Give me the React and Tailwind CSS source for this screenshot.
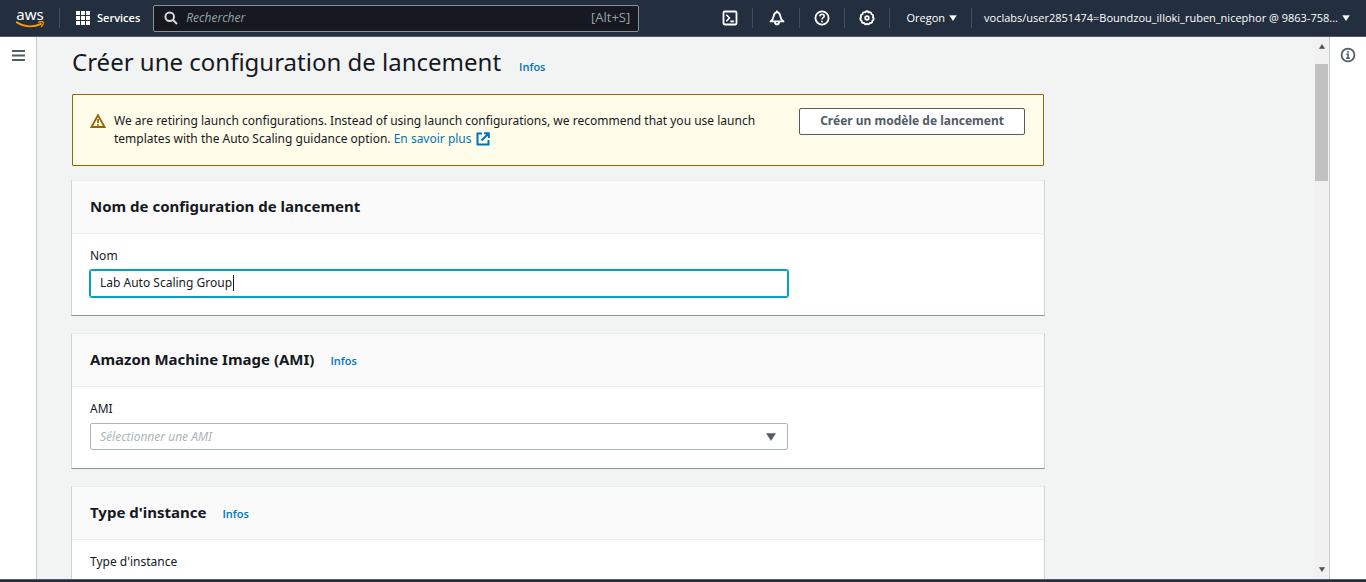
function Caret({ className }) {
  return (
    <svg viewBox="0 0 10 8" className={className} fill="currentColor" aria-hidden="true">
      <path d="M0.5 0.5h9L5 7.5z" stroke="currentColor" strokeWidth="0.5" strokeLinejoin="round" />
    </svg>
  );
}

function Divider() {
  return <span className="h-5 w-px shrink-0 bg-[#414d5c]" />;
}

function IconButton({ label, children }) {
  return (
    <button type="button" aria-label={label} className="flex h-9 w-11 shrink-0 items-center justify-center text-white">
      <svg viewBox="0 0 16 16" className="size-4" fill="none" stroke="currentColor" strokeWidth="1.8" strokeLinejoin="round" aria-hidden="true">
        {children}
      </svg>
    </button>
  );
}

function TopBar() {
  return (
    <header className="flex h-[37px] shrink-0 items-center border-b border-[#545b64] bg-[#232f3e] font-['Open_Sans',sans-serif] text-[11px] text-white">
      <a href="#" aria-label="AWS" className="ml-4 flex w-7 shrink-0 flex-col items-center font-['Noto_Sans',sans-serif] text-[15px] leading-[14px]">
        <span>aws</span>
        <svg viewBox="0 0 28 8" className="h-2 w-7" aria-hidden="true">
          <path d="M0.6 1.300c7.600 5 17 5.200 24.400 1.600" fill="none" stroke="#f90" strokeWidth="1.800" strokeLinecap="round" />
          <path d="M22.600 1.200c1.600-.9 4.200-.8 4.600-.2.4.7-.3 3.100-1.600 4.500" fill="none" stroke="#f90" strokeWidth="1.300" strokeLinecap="round" />
        </svg>
      </a>
      <span className="ml-[15px] flex"><Divider /></span>
      <button type="button" className="ml-4 flex shrink-0 items-center gap-[7px] text-[11px] font-semibold">
        <svg viewBox="0 0 14 14" className="size-3.5" fill="currentColor" aria-hidden="true">
          {[0, 5, 10].map((y) => [0, 5, 10].map((x) => <rect key={`${x}-${y}`} x={x} y={y} width="4" height="4" />))}
        </svg>
        Services
      </button>
      <label className="mr-auto ml-[13px] flex h-[27px] w-[486px] min-w-0 items-center gap-2 rounded-[2px] border border-[#879596] bg-[#16191f] px-2 text-[#95a5a6]">
        <svg viewBox="0 0 14 14" className="ml-0.5 size-3.5 shrink-0" fill="none" stroke="#d5dbdb" strokeWidth="2" aria-hidden="true">
          <circle cx="5.700" cy="5.700" r="4.300" />
          <path d="M9 9l4 4" />
        </svg>
        <input type="search" aria-label="Rechercher" placeholder="Rechercher" className="min-w-0 flex-1 bg-transparent text-[12px] italic outline-none placeholder:text-[#95a5a6]" />
        <span className="text-[13px]">[Alt+S]</span>
      </label>
      <nav className="flex min-w-0 items-center">
        <IconButton label="CloudShell">
          <rect x="1.500" y="1.500" width="13" height="13" rx="1.200" />
          <path d="M4.300 4.800L7.500 8l-3.200 3.200M8.300 11.400h3.700" strokeWidth="1.600" />
        </IconButton>
        <Divider />
        <span className="ml-0.5 flex">
          <IconButton label="Notifications">
            <path d="M8 2.200c-2 .3-3 1.700-3.300 3.900C4.400 8.700 3.400 10 1.500 11.400h13c-1.900-1.400-2.900-2.700-3.200-5.300C11 3.900 10 2.500 8 2.200z" />
            <path d="M5.700 12c.3 1.500 1.200 2.400 2.300 2.400s2-.9 2.300-2.400M8 .6v1.600" />
          </IconButton>
        </span>
        <Divider />
        <IconButton label="Aide">
          <circle cx="8" cy="8" r="6.600" />
          <path d="M5.900 6.400c.1-1.400 1-2.100 2.200-2.100s2.100.8 2.100 1.900c0 1.500-2.200 1.600-2.200 3.300" strokeWidth="1.600" />
          <path d="M8 10.700v1.600" strokeWidth="1.700" />
        </IconButton>
        <Divider />
        <IconButton label="Paramètres">
          <path d="M6.300 2.300Q8 .2 9.700 2.300Q12.300 1.600 12.500 4.200Q15 5 13.900 7.200Q15.600 9.200 13.500 10.500Q13.400 13.200 10.900 12.900Q9.700 15.300 8 13.800Q6.300 15.300 5.100 12.900Q2.600 13.200 2.500 10.500Q.4 9.200 2.100 7.200Q1 5 3.500 4.200Q3.700 1.600 6.300 2.300z" strokeWidth="1.900" />
          <circle cx="8" cy="8" r="1.800" />
        </IconButton>
        <Divider />
        <button type="button" className="flex h-9 shrink-0 items-center gap-1 pr-3.5 pl-4 text-[11px] font-medium">
          Oregon
          <Caret className="h-1.5 w-2" />
        </button>
        <Divider />
        <button type="button" className="flex h-9 min-w-0 items-center gap-1 px-3 text-[11px] font-medium whitespace-nowrap">
          <span>voclabs/user2851474=Boundzou_illoki_ruben_nicephor @ 9863-758...</span>
          <Caret className="mr-1 h-1.5 w-2 shrink-0" />
        </button>
      </nav>
    </header>
  );
}

function InfoLink() {
  return <a href="#" className="font-['Open_Sans',sans-serif] text-[11px] leading-4 font-semibold text-[#0073bb]">Infos</a>;
}

function Panel({ title, info, children }) {
  return (
    <section className="mb-[17px] border-x border-t border-b border-x-[#d0d5d5] border-t-[#eaeded] border-b-[#879596] bg-white">
      <div className="flex h-[53px] items-center gap-4 border-b border-[#eaeded] bg-[#fafafa] px-[18px] pb-0.5">
        <h2 className="text-[15px] leading-5 font-bold text-[#16191f]">{title}</h2>
        {info && <span className="flex pt-1"><InfoLink /></span>}
      </div>
      <div className="px-[18px] pt-3 pb-[18px]">{children}</div>
    </section>
  );
}

function SelectField({ id, label, placeholder, labelClass = 'pb-1' }) {
  return (
    <>
      <label htmlFor={id} className={`block text-[12px] leading-5 ${labelClass}`}>{label}</label>
      <div className="relative w-3/4 max-w-[698px]">
        <select id={id} defaultValue="" className="block h-[27px] w-full appearance-none rounded-[2px] border border-[#aab7b8] bg-white px-[9px] text-[12px] text-[#aab7b8] italic">
          <option value="">{placeholder}</option>
        </select>
        <Caret className="pointer-events-none absolute top-2.5 right-3 h-2 w-2.5 text-[#545b64]" />
      </div>
    </>
  );
}

export default function App() {
  return (
    <div className="flex h-screen flex-col overflow-hidden bg-[#f2f3f3] font-['Noto_Sans',sans-serif] text-[12px] text-[#16191f]">
      <TopBar />
      <div className="flex min-h-0 flex-1">
        <aside className="flex w-[37px] shrink-0 flex-col items-center border-r border-[#c6cccd] bg-white pt-3">
          <button type="button" aria-label="Ouvrir la navigation" className="text-[#545b64]">
            <svg viewBox="0 0 13 13" className="size-[13px]" fill="currentColor" aria-hidden="true">
              <path d="M0 1h13v2H0zM0 5.500h13v2H0zM0 10h13v2H0z" />
            </svg>
          </button>
        </aside>

        <main className="min-w-0 flex-1 overflow-hidden pr-4 pl-[34px]">
          <div className="max-w-[974px]">
            <div className="flex items-center gap-[18px] pt-[7px] pb-3.5 pl-px">
              <h1 className="text-[24px] leading-9">Créer une configuration de lancement</h1>
              <span className="flex pt-2.5"><InfoLink /></span>
            </div>

            <div className="mx-px mb-3.5 flex items-start gap-2 rounded-[1px] border border-[#906806] bg-[#fffce9] px-[18px] pt-[13px] pb-[17px]">
              <svg viewBox="0 0 16 16" className="mt-[5px] -ml-px size-4 shrink-0" fill="none" stroke="#906806" strokeWidth="1.800" aria-hidden="true">
                <path d="M8 2.200L14.500 14h-13z" strokeLinejoin="miter" />
                <path d="M8 6v4M8 11.200v1.500" strokeWidth="1.700" />
              </svg>
              <p className="w-[660px] min-w-0 pt-1 text-[12px] leading-[18px]">
                We are retiring launch configurations. Instead of using launch configurations, we recommend that you use launch templates with the Auto Scaling guidance option.{' '}
                <a href="#" className="whitespace-nowrap text-[#0073bb]">
                  En savoir plus
                  <svg viewBox="0 0 14 14" className="ml-1 inline size-3.5 align-[-3px]" fill="none" stroke="currentColor" strokeWidth="2" aria-hidden="true">
                    <path d="M6 1.500H1.500v11h11V8M8 1.200h4.800V6M12.500 1.500L5.500 8.500" />
                  </svg>
                </a>
              </p>
              <button type="button" className="ml-auto h-[27px] shrink-0 rounded-[2px] border border-[#545b64] bg-white px-5 pb-0.5 text-[12px] font-bold text-[#545b64]">
                Créer un modèle de lancement
              </button>
            </div>

            <Panel title="Nom de configuration de lancement">
              <label htmlFor="config-name" className="block pb-1 text-[12px] leading-5">Nom</label>
              <div className="relative w-3/4 max-w-[698px]">
                <input
                  id="config-name"
                  type="text"
                  defaultValue="Lab Auto Scaling Group"
                  className="block h-[27px] w-full rounded-[2px] border border-[#00a1c9] px-[9px] pb-0.5 text-[12px] ring-1 ring-[#00a1c9] outline-none"
                />
                <span className="absolute top-[5px] left-[143px] h-4 w-px bg-[#16191f]" />
              </div>
            </Panel>

            <Panel title="Amazon Machine Image (AMI)" info>
              <SelectField id="ami" label="AMI" placeholder="Sélectionner une AMI" />
            </Panel>

            <Panel title="Type d'instance" info>
              <SelectField id="instance-type" label="Type d'instance" placeholder="Sélectionner un type d'instance" labelClass="pb-3" />
            </Panel>
          </div>
        </main>

        <div className="flex w-[15px] shrink-0 flex-col items-center bg-[#f1f1f1]" aria-hidden="true">
          <Caret className="mt-[7px] mb-2 h-[5px] w-2 shrink-0 rotate-180 text-[#505050]" />
          <div className="mt-[7px] h-[117px] w-[13px] bg-[#c1c1c1]" />
          <Caret className="mt-auto mb-[7px] h-[5px] w-2 shrink-0 text-[#505050]" />
        </div>

        <aside className="flex w-[37px] shrink-0 flex-col items-center border-l border-[#c6cccd] bg-white pt-2.5">
          <button type="button" aria-label="Informations" className="text-[#545b64]">
            <svg viewBox="0 0 16 16" className="size-4" fill="none" stroke="currentColor" strokeWidth="1.800" aria-hidden="true">
              <circle cx="8" cy="8" r="6.400" />
              <path d="M8 4v1.700M6.300 7.300H8v4M6 11.300h4" strokeWidth="1.600" />
            </svg>
          </button>
        </aside>
      </div>
      <footer className="h-[3px] shrink-0 border-t border-[#545b64] bg-[#232f3e]" />
    </div>
  );
}
